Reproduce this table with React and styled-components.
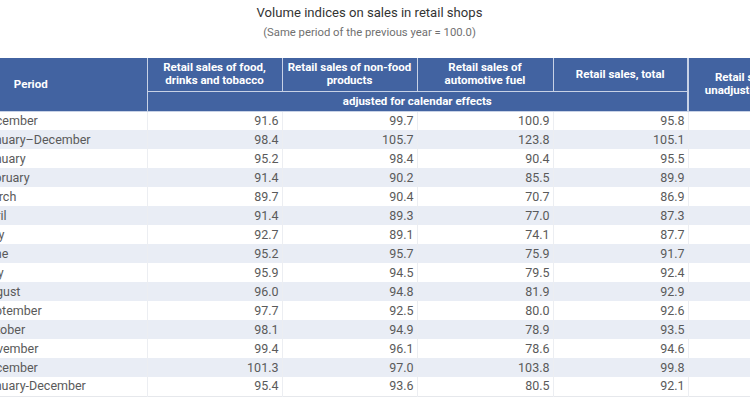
import styled, { createGlobalStyle } from "styled-components";

const GlobalStyle = createGlobalStyle`
    html, body {
        margin: 0;
        padding: 0;
        background: #fff;
        overflow: hidden;
    }
    body {
        font-family: Roboto, "Liberation Sans", Arial, sans-serif;
        width: 750px;
        height: 420px;
    }
`;

const Page = styled.div`
    width: 750px;
    height: 420px;
    overflow: hidden;
`;

const Heading = styled.div`
    display: flex;
    flex-direction: column;
    align-items: center;
    padding: 5px 11px 0 0;
    height: 54px;
    box-sizing: border-box;
`;

const Title = styled.div`
    font-size: 13.1px;
    color: #333;
    line-height: 16px;
`;

const Subtitle = styled.div`
    font-size: 11.3px;
    color: #707070;
    line-height: 15px;
    margin-top: 4px;
`;

const Table = styled.table`
    border-collapse: collapse;
    table-layout: fixed;
    margin-left: -85px;
    margin-top: 4px;
    width: 889px;
    border-bottom: 1px solid #e6e8ec;
`;

const Th = styled.th`
    background: #4263a1;
    color: #fff;
    font-size: 11.5px;
    font-weight: 700;
    line-height: 13px;
    text-align: center;
    vertical-align: middle;
    padding: 0 2px;
    border: 1px solid #c8d2e6;
    border-top: none;
    height: ${(p) => p.h || 31}px;
    box-sizing: border-box;
`;

const Tr = styled.tr`
    background: ${(p) => (p.shaded ? "#e9edf5" : "#fff")};
    height: 19px;
`;

const Td = styled.td`
    font-size: 12.5px;
    color: #5a5a5a;
    line-height: 18px;
    padding: ${(p) => (p.label ? "0 0 0 66px" : "0 3px 0 0")};
    text-align: ${(p) => (p.label ? "left" : "right")};
    border-right: 1px solid #eceef2;
    white-space: nowrap;
    overflow: hidden;
`;

const rows = [
    ["December", "91.6", "99.7", "100.9", "95.8"],
    ["January–December", "98.4", "105.7", "123.8", "105.1"],
    ["January", "95.2", "98.4", "90.4", "95.5"],
    ["February", "91.4", "90.2", "85.5", "89.9"],
    ["March", "89.7", "90.4", "70.7", "86.9"],
    ["April", "91.4", "89.3", "77.0", "87.3"],
    ["May", "92.7", "89.1", "74.1", "87.7"],
    ["June", "95.2", "95.7", "75.9", "91.7"],
    ["July", "95.9", "94.5", "79.5", "92.4"],
    ["August", "96.0", "94.8", "81.9", "92.9"],
    ["September", "97.7", "92.5", "80.0", "92.6"],
    ["October", "98.1", "94.9", "78.9", "93.5"],
    ["November", "99.4", "96.1", "78.6", "94.6"],
    ["December", "101.3", "97.0", "103.8", "99.8"],
    ["January-December", "95.4", "93.6", "80.5", "92.1"],
];

export default function App() {
    return (
        <Page>
            <GlobalStyle />
            <Heading>
                <Title>Volume indices on sales in retail shops</Title>
                <Subtitle>(Same period of the previous year = 100.0)</Subtitle>
            </Heading>
            <Table>
                <colgroup>
                    <col style={{ width: 232 }} />
                    <col style={{ width: 135 }} />
                    <col style={{ width: 135 }} />
                    <col style={{ width: 136 }} />
                    <col style={{ width: 135 }} />
                    <col style={{ width: 116 }} />
                </colgroup>
                <thead>
                    <tr>
                        <Th rowSpan={2} style={{ borderLeft: "none" }}>
                            Period
                        </Th>
                        <Th h={33}>Retail sales of food, drinks and tobacco</Th>
                        <Th h={33}>Retail sales of non-food products</Th>
                        <Th h={33}>Retail sales of automotive fuel</Th>
                        <Th h={33}>Retail sales, total</Th>
                        <Th rowSpan={2} style={{ borderLeftWidth: 2 }}>
                            Retail sales, unadjusted data
                        </Th>
                    </tr>
                    <tr>
                        <Th colSpan={4} h={20}>
                            adjusted for calendar effects
                        </Th>
                    </tr>
                </thead>
                <tbody>
                    {rows.map((r, i) => (
                        <Tr key={i} shaded={i % 2 === 1}>
                            <Td label>{r[0]}</Td>
                            {r.slice(1).map((v, j) => (
                                <Td key={j}>{v}</Td>
                            ))}
                            <Td />
                        </Tr>
                    ))}
                </tbody>
            </Table>
        </Page>
    );
}
